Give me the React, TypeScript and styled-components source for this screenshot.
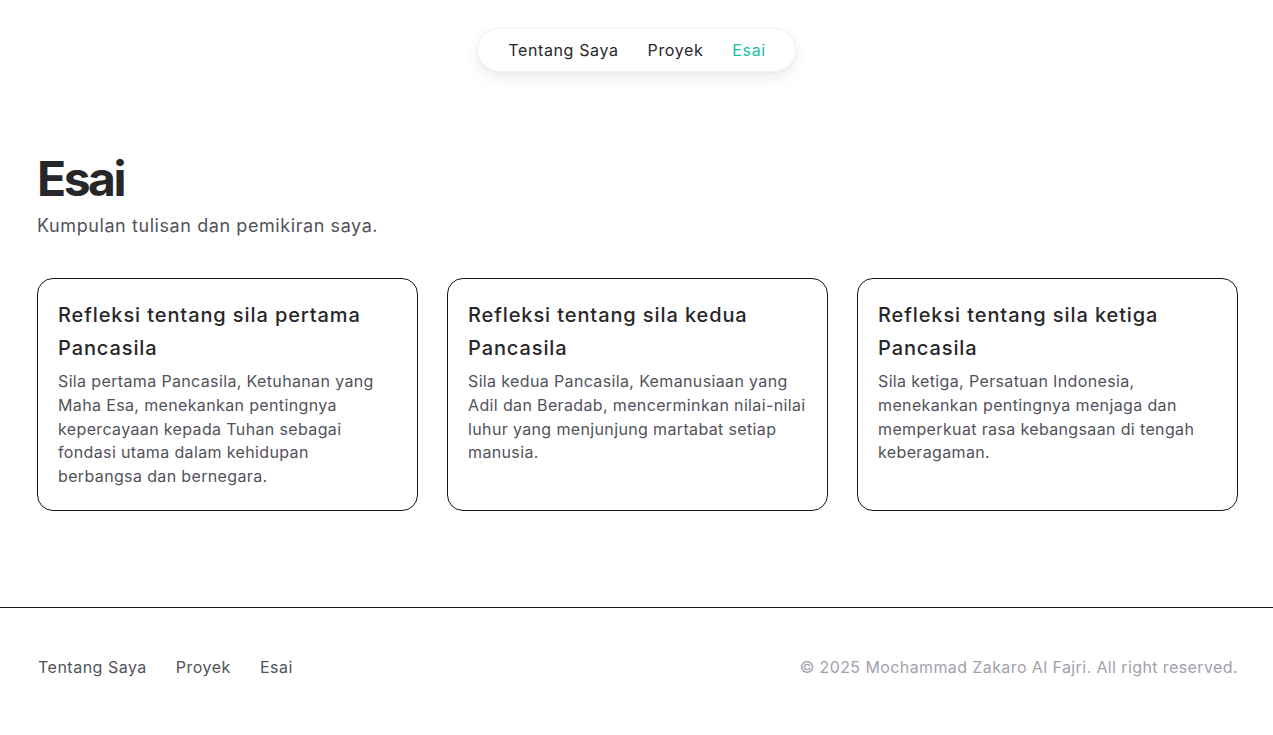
import React from "react";
import styled, { createGlobalStyle } from "styled-components";

const Global = createGlobalStyle`
  * { box-sizing: border-box; }
  html, body { margin: 0; padding: 0; background: #ffffff; }
  body { font-family: Inter, "Noto Sans", "Liberation Sans", sans-serif; color: #27272a; -webkit-font-smoothing: antialiased; }
`;

const Page = styled.div`
  display: flex;
  flex-direction: column;
  min-height: 735px;
`;

const NavWrap = styled.header`
  display: flex;
  justify-content: center;
  padding-top: 28px;
`;

const NavPill = styled.nav`
  display: flex;
  align-items: center;
  gap: 29px;
  height: 44px;
  padding: 0 29px 0 30px;
  border-radius: 9999px;
  background: #fff;
  border: 1px solid #f1f1f3;
  box-shadow: 0 6px 16px rgba(0, 0, 0, 0.07), 0 1px 3px rgba(0, 0, 0, 0.04);
`;

const NavLink = styled.a<{ $active?: boolean }>`
  font-size: 16px;
  line-height: 22px;
  font-weight: 400;
  letter-spacing: 0.62px;
  text-decoration: none;
  color: ${(p) => (p.$active ? "#14bfa6" : "#27272a")};
`;

const Main = styled.main`
  padding: 83px 35px 0 37px;
  flex: 1;
`;

const Title = styled.h1`
  margin: 0;
  font-size: 48px;
  font-weight: 700;
  line-height: 1;
  letter-spacing: -2.5px;
  color: #27272a;
`;

const Subtitle = styled.p`
  margin: 9px 0 0;
  font-size: 18px;
  line-height: 28px;
  letter-spacing: 0.58px;
  color: #52525b;
`;

const Grid = styled.div`
  display: grid;
  grid-template-columns: repeat(3, 1fr);
  gap: 29px;
  margin-top: 38px;
`;

const Card = styled.article`
  border: 1px solid #18181b;
  border-radius: 16px;
  padding: 20px 20px 21px;
`;

const CardTitle = styled.h2`
  margin: 0;
  font-size: 20px;
  font-weight: 500;
  line-height: 33px;
  letter-spacing: 0.9px;
  color: #27272a;
`;

const CardText = styled.p`
  margin: 5px 0 0;
  font-size: 16px;
  line-height: 23.75px;
  letter-spacing: 0.36px;
  color: #52525b;
`;

const Footer = styled.footer`
  margin-top: 96px;
  border-top: 1px solid #18181b;
  padding: 47px 35px 57px 38px;
  display: flex;
  justify-content: space-between;
  align-items: center;
`;

const FooterLinks = styled.div`
  display: flex;
  gap: 29px;
`;

const FooterLink = styled.a`
  font-size: 16px;
  line-height: 24px;
  letter-spacing: 0.5px;
  color: #52525b;
  text-decoration: none;
`;

const Copy = styled.p`
  margin: 0;
  font-size: 16px;
  line-height: 24px;
  letter-spacing: 0.4px;
  color: #a1a1aa;
`;

const essays = [
  {
    title: "Refleksi tentang sila pertama Pancasila",
    text: "Sila pertama Pancasila, Ketuhanan yang Maha Esa, menekankan pentingnya kepercayaan kepada Tuhan sebagai fondasi utama dalam kehidupan berbangsa dan bernegara.",
  },
  {
    title: "Refleksi tentang sila kedua Pancasila",
    text: "Sila kedua Pancasila, Kemanusiaan yang Adil dan Beradab, mencerminkan nilai-nilai luhur yang menjunjung martabat setiap manusia.",
  },
  {
    title: "Refleksi tentang sila ketiga Pancasila",
    text: "Sila ketiga, Persatuan Indonesia, menekankan pentingnya menjaga dan memperkuat rasa kebangsaan di tengah keberagaman.",
  },
];

export default function App() {
  return (
    <Page>
      <Global />
      <NavWrap>
        <NavPill>
          <NavLink href="#">Tentang Saya</NavLink>
          <NavLink href="#">Proyek</NavLink>
          <NavLink href="#" $active>Esai</NavLink>
        </NavPill>
      </NavWrap>
      <Main>
        <Title>Esai</Title>
        <Subtitle>Kumpulan tulisan dan pemikiran saya.</Subtitle>
        <Grid>
          {essays.map((e) => (
            <Card key={e.title}>
              <CardTitle>{e.title}</CardTitle>
              <CardText>{e.text}</CardText>
            </Card>
          ))}
        </Grid>
      </Main>
      <Footer>
        <FooterLinks>
          <FooterLink href="#">Tentang Saya</FooterLink>
          <FooterLink href="#">Proyek</FooterLink>
          <FooterLink href="#">Esai</FooterLink>
        </FooterLinks>
        <Copy>© 2025 Mochammad Zakaro Al Fajri. All right reserved.</Copy>
      </Footer>
    </Page>
  );
}
